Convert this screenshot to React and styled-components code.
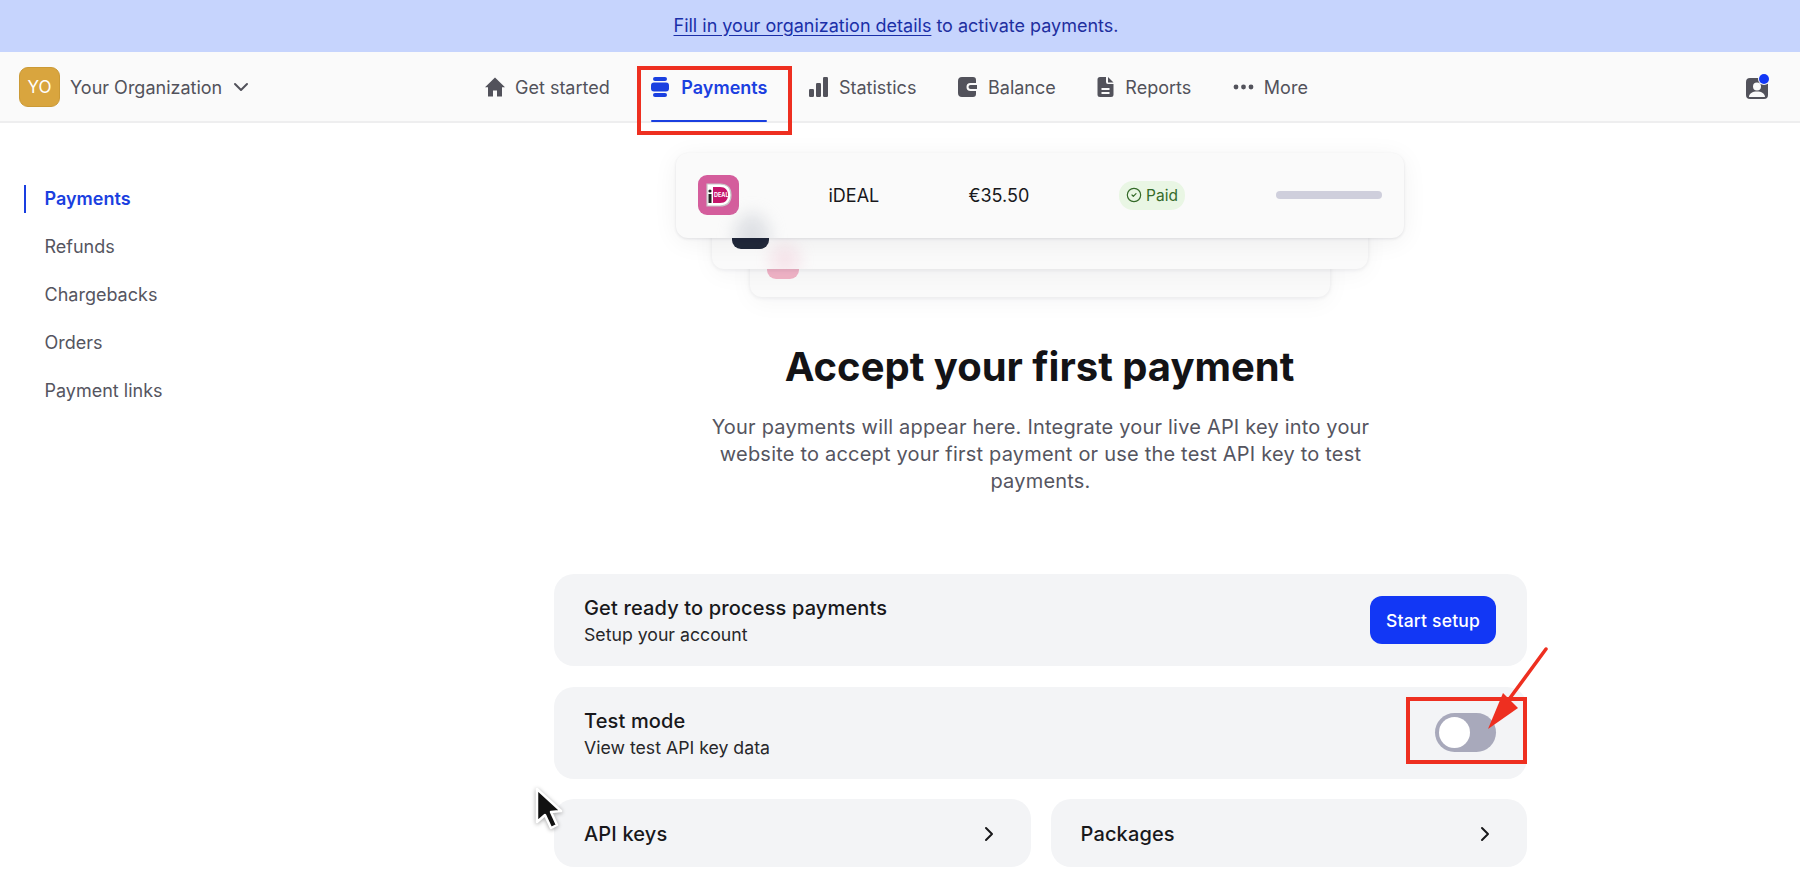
import React from "react";
import styled, { createGlobalStyle } from "styled-components";
import { ChevronDown, ChevronRight, CircleCheck } from "lucide-react";

const Global = createGlobalStyle`
  html, body { margin: 0; padding: 0; background: #fff; }
  body { font-family: Inter, "Liberation Sans", sans-serif; height: 872px; overflow: hidden; color: #18181b; }
  * { box-sizing: border-box; }
`;

const Page = styled.div`position: relative; width: 1800px; height: 872px; overflow: hidden;`;

const Banner = styled.div`
  height: 52px; padding: 0 8px 2px 0; background: #c6d4fd; color: #1f2f9f; font-size: 18px;
  display: flex; align-items: center; justify-content: center;
`;
const BannerLink = styled.a`color: #1a2fa8; font-weight: 400; text-decoration: underline; text-underline-offset: 3px; margin-right: 5px;`;

const TopBar = styled.header`
  height: 71px; background: #fafafa; border-bottom: 2px solid #eeeeef;
  display: flex; align-items: stretch;
`;
const OrgBlock = styled.div`width: 484px; padding: 1px 0 0 19px; display: flex; align-items: center; gap: 10px; color: #52525b; font-size: 18px;`;
const OrgAvatar = styled.div`
  width: 41px; height: 40px; border-radius: 9px; background: #d9a53e; border: 1px solid #cb9a36;
  color: #fff; font-size: 17px; display: flex; align-items: center; justify-content: center;
`;
const OrgChevron = styled(ChevronDown)`margin-left: -3px; color: #52525b;`;

const Tabs = styled.nav`display: flex; gap: 41.6px; align-items: stretch;`;
const Tab = styled.a`
  position: relative; display: flex; align-items: center; gap: ${p => p.$gap || 11}px; padding-top: 1px;
  font-size: 18px; white-space: nowrap;
  color: ${p => (p.$active ? "#1a3fe0" : "#52525b")};
  font-weight: ${p => (p.$active ? 600 : 400)};
  &::after {
    content: ""; display: ${p => (p.$active ? "block" : "none")}; position: absolute;
    left: 0; right: 0; bottom: -1px; height: 2px; background: #1a3fe0; border-radius: 1px;
  }
`;
const UserSlot = styled.div`margin-left: auto; padding: 1px 31px 0 0; display: flex; align-items: center;`;

const Body = styled.div`display: flex; align-items: flex-start;`;
const Side = styled.aside`width: 554px; padding: 62px 0 0 24px; display: flex; flex-direction: column; gap: 20px;`;
const SideItem = styled.a`
  display: block; height: 28px; line-height: 28px; padding-left: 18.5px; font-size: 18px;
  color: ${p => (p.$active ? "#1a3fe0" : "#55555f")};
  font-weight: ${p => (p.$active ? 600 : 400)};
  border-left: 2px solid ${p => (p.$active ? "#1a3fe0" : "transparent")};
`;

const Main = styled.main`width: 973px; padding-top: 30px; display: flex; flex-direction: column; align-items: center;`;

const Stack = styled.div`position: relative; width: 728px; height: 144px; margin: 0 2px 44px 0;`;
const GhostCard = styled.div`
  position: absolute; top: ${p => p.$top}px; left: ${p => p.$inset}px; right: ${p => p.$inset}px; height: ${p => p.$h}px;
  background: #fafafa; border-radius: 12px; overflow: hidden;
  box-shadow: 0 1px 4px rgba(20,20,40,.08), 0 6px 24px rgba(20,20,40,.04);
`;
const GhostIcon = styled.div`
  position: absolute; left: ${p => p.$left}px; bottom: ${p => p.$bottom}px; width: ${p => p.$w}px; height: ${p => p.$h}px;
  border-radius: 0 0 9px 9px; background: ${p => p.$bg};
`;
const GhostDots = styled.div`
  position: absolute; left: 6px; bottom: 10px; color: #8d94a0; font-size: 7px; letter-spacing: 1px; line-height: 7px; font-family: "Liberation Sans", sans-serif;
`;
const Haze = styled.div`
  position: absolute; left: ${p => p.$left}px; top: ${p => p.$top}px; width: ${p => p.$w}px; height: ${p => p.$h}px;
  border-radius: 50%; background: ${p => p.$bg}; filter: blur(8px);
`;
const TopCard = styled.div`
  position: absolute; top: 0; left: 0; right: 0; height: 85px; background: #fafafa; border-radius: 12px; overflow: hidden;
  box-shadow: 0 1px 3px rgba(20,20,40,.10), 0 4px 26px rgba(20,20,40,.06);
`;
const RowGrid = styled.div`
  position: relative; display: grid; grid-template-columns: 22px 41px 90px 140px 150.5px 65.5px 91px 106px; align-items: center; height: 100%;
  font-size: 18px; padding-bottom: 1px;
`;
const RowText = styled.span`grid-column: ${p => p.$col};`;
const Pill = styled.span`
  grid-column: 6; height: 29px; width: 66px; border-radius: 14px; background: #e9f6e4; color: #356b2a;
  display: flex; align-items: center; justify-content: center; gap: 4px; font-size: 15.5px;
`;
const Bar = styled.span`grid-column: 8; height: 8px; border-radius: 4px; background: #cfcfdc;`;
const Logo = styled.span`grid-column: 2; display: flex;`;

const Title = styled.h1`margin: 0 2px 21px 0; font-size: 40px; line-height: 52px; font-weight: 700; color: #131316;`;
const Lead = styled.p`margin: 0 0 79px; width: 670px; font-size: 20px; line-height: 27px; text-align: center; color: #55555f; letter-spacing: .2px;`;

const Cards = styled.div`width: 100%; display: grid; grid-template-columns: 1fr 1fr; column-gap: 20px; row-gap: 20.5px;`;
const Panel = styled.section`
  grid-column: ${p => (p.$half ? "auto" : "1 / -1")};
  height: ${p => (p.$half ? 68 : 92)}px; background: #f3f4f6; border-radius: 20px;
  display: flex; align-items: center; justify-content: space-between;
  padding: ${p => (p.$half ? "1px 30px 0" : "2px 31px 0 30px")};
`;
const PanelText = styled.div`display: flex; flex-direction: column; gap: 4px;`;
const PanelTitle = styled.div`font-size: 20px; line-height: 24px; font-weight: 500; letter-spacing: .15px; color: #18181b;`;
const PanelSub = styled.div`font-size: 17.7px; line-height: 22px; color: #27272a;`;
const Cta = styled.button`
  width: 126px; height: 48px; margin-top: -2px; border: 0; border-radius: 12px; background: #1237f5; color: #fff;
  font: 500 17.5px Inter, sans-serif; letter-spacing: .2px;
`;
const Toggle = styled.div`
  width: 61px; height: 39px; margin-top: -2px; border-radius: 20px; background: #a8a9bb; padding: 4px; display: flex;
`;
const Knob = styled.div`width: 31px; height: 31px; border-radius: 50%; background: #fff;`;
const Chevron = styled(ChevronRight)`color: #18181b;`;

const RedBox = styled.div`
  position: absolute; left: ${p => p.$x}px; top: ${p => p.$y}px; width: ${p => p.$w}px; height: ${p => p.$h}px;
  border: 4px solid #ee2f20; pointer-events: none;
`;
const Overlay = styled.svg`position: absolute; left: ${p => p.$x}px; top: ${p => p.$y}px; pointer-events: none; overflow: visible;`;
const CursorMark = styled(Overlay)`filter: drop-shadow(0 1px 2px rgba(0,0,0,.35));`;

const ico = "#52525b";
const Home = () => (
  <svg width="22" height="22" viewBox="0 0 22 22"><path d="M11 1.500 1 11.200h3V20.500h5v-6h4v6h5v-9.300h3z" fill={ico} /></svg>
);
const Stacked = () => (
  <svg width="18" height="22" viewBox="0 0 18 22" fill="#1a3fe0">
    <rect x="2" y="1" width="14" height="4" rx="2" /><rect x="0" y="6.500" width="18" height="9" rx="3" /><rect x="2" y="17" width="14" height="4" rx="2" />
  </svg>
);
const Bars = () => (
  <svg width="19" height="22" viewBox="0 0 19 22" fill={ico}>
    <rect x="0" y="13" width="5" height="8" rx="1.200" /><rect x="7" y="7" width="5" height="14" rx="1.200" /><rect x="14" y="1" width="5" height="20" rx="1.200" />
  </svg>
);
const Wallet = () => (
  <svg width="19" height="22" viewBox="0 0 19 22">
    <path fill={ico} fillRule="evenodd" d="M4 1h11a3 3 0 0 1 3 3v3h-5.500a4 4 0 0 0 0 8H18v3a3 3 0 0 1-3 3H4a4 4 0 0 1-4-4V5a4 4 0 0 1 4-4z" />
    <path fill={ico} d="M12.500 9H19v4h-6.500a2 2 0 0 1 0-4z" />
  </svg>
);
const Doc = () => (
  <svg width="17" height="22" viewBox="0 0 17 22">
    <path fill={ico} fillRule="evenodd" d="M3 1h6v5a2 2 0 0 0 2 2h5.500v10.500a2.500 2.500 0 0 1-2.500 2.500H3a2.500 2.500 0 0 1-2.500-2.500v-15A2.500 2.500 0 0 1 3 1zm1.500 11v2h8v-2zm0 4v2h8v-2z" />
    <path fill={ico} d="M11 1l5.500 5.500H11z" />
  </svg>
);
const Dots = () => (
  <svg width="21" height="22" viewBox="0 0 21 22" fill={ico}><circle cx="3" cy="11" r="2.400" /><circle cx="10.500" cy="11" r="2.400" /><circle cx="18" cy="11" r="2.400" /></svg>
);
const UserIcon = () => (
  <svg width="24" height="26" viewBox="0 0 24 26">
    <path fill={ico} fillRule="evenodd" d="M5 4h14a4 4 0 0 1 4 4v13a4 4 0 0 1-4 4H5a4 4 0 0 1-4-4V8a4 4 0 0 1 4-4zm7 4.500a4 4 0 1 0 0 8 4 4 0 0 0 0-8zM4 23h16c0-3.500-3.500-5.500-8-5.500S4 19.500 4 23z" />
    <circle cx="19" cy="5" r="6" fill="#fafafa" />
    <circle cx="19" cy="5" r="5" fill="#1237f5" />
  </svg>
);
const IdealLogo = () => (
  <svg width="41" height="40" viewBox="0 0 41 40">
    <rect width="41" height="40" rx="9" fill="#d45d9c" />
    <path d="M9 9h13c8 0 11 5 11 11s-3 11-11 11H9z" fill="#fff" stroke="#c8c8c8" strokeWidth="1.200" />
    <path d="M15 12h7c5.500 0 8 3.500 8 8s-2.500 8-8 8h-7z" fill="#c5156a" />
    <circle cx="12" cy="16" r="1.600" fill="#222" />
    <rect x="10.500" y="19" width="3" height="9" fill="#222" />
    <text x="16" y="21.500" fontSize="5.500" fontWeight="700" fill="#fff" fontFamily="Inter, sans-serif">DEAL</text>
  </svg>
);

export default function App() {
  return (
    <Page>
      <Global />
      <Banner>
        <BannerLink>Fill in your organization details</BannerLink> to activate payments.
      </Banner>
      <TopBar>
        <OrgBlock>
          <OrgAvatar>YO</OrgAvatar>
          Your Organization
          <OrgChevron size={24} strokeWidth={2} />
        </OrgBlock>
        <Tabs>
          <Tab $gap={9}><Home />Get started</Tab>
          <Tab $active $gap={12}><Stacked />Payments</Tab>
          <Tab><Bars />Statistics</Tab>
          <Tab><Wallet />Balance</Tab>
          <Tab><Doc />Reports</Tab>
          <Tab $gap={10}><Dots />More</Tab>
        </Tabs>
        <UserSlot><UserIcon /></UserSlot>
      </TopBar>
      <Body>
        <Side>
          <SideItem $active>Payments</SideItem>
          <SideItem>Refunds</SideItem>
          <SideItem>Chargebacks</SideItem>
          <SideItem>Orders</SideItem>
          <SideItem>Payment links</SideItem>
        </Side>
        <Main>
          <Stack>
            <GhostCard $top={60} $inset={74} $h={84}>
              <GhostIcon $left={17} $bottom={18} $w={32} $h={30} $bg="#f0b3c6" />
            </GhostCard>
            <GhostCard $top={30} $inset={36} $h={86}>
              <GhostIcon $left={20} $bottom={20} $w={37} $h={30} $bg="#20283a"><GhostDots>•••</GhostDots></GhostIcon>
              <Haze $left={58} $top={62} $w={30} $h={30} $bg="rgba(240,180,198,.3)" />
            </GhostCard>
            <TopCard>
              <RowGrid>
                <Logo><IdealLogo /></Logo>
                <RowText $col={4}>iDEAL</RowText>
                <RowText $col={5}>€35.50</RowText>
                <Pill><CircleCheck size={16} strokeWidth={1.8} />Paid</Pill>
                <Bar />
              </RowGrid>
              <Haze $left={58} $top={60} $w={36} $h={50} $bg="rgba(190,195,205,.45)" />
            </TopCard>
          </Stack>
          <Title>Accept your first payment</Title>
          <Lead>Your payments will appear here. Integrate your live API key into your website to accept your first payment or use the test API key to test payments.</Lead>
          <Cards>
            <Panel>
              <PanelText>
                <PanelTitle>Get ready to process payments</PanelTitle>
                <PanelSub>Setup your account</PanelSub>
              </PanelText>
              <Cta>Start setup</Cta>
            </Panel>
            <Panel>
              <PanelText>
                <PanelTitle>Test mode</PanelTitle>
                <PanelSub>View test API key data</PanelSub>
              </PanelText>
              <Toggle><Knob /></Toggle>
            </Panel>
            <Panel $half>
              <PanelTitle>API keys</PanelTitle>
              <Chevron size={24} strokeWidth={2} />
            </Panel>
            <Panel $half>
              <PanelTitle>Packages</PanelTitle>
              <Chevron size={24} strokeWidth={2} />
            </Panel>
          </Cards>
        </Main>
      </Body>

      <RedBox $x={637} $y={66} $w={155} $h={69} />
      <RedBox $x={1406} $y={697} $w={121} $h={67} />
      <Overlay $x={1480} $y={640} width="80" height="100" viewBox="0 0 80 100">
        <path d="M66 9 30 58" stroke="#ee2f20" strokeWidth="3.500" strokeLinecap="round" />
        <path d="M8 89 23 53 38 68z" fill="#ee2f20" />
      </Overlay>
      <CursorMark $x={530} $y={782} width="36" height="50" viewBox="0 0 36 50">
        <path d="M7 7 7 40 15 33 21 46 27 43 21 30 31 29z" fill="#111" stroke="#fff" strokeWidth="2.500" strokeLinejoin="round" />
      </CursorMark>
    </Page>
  );
}
